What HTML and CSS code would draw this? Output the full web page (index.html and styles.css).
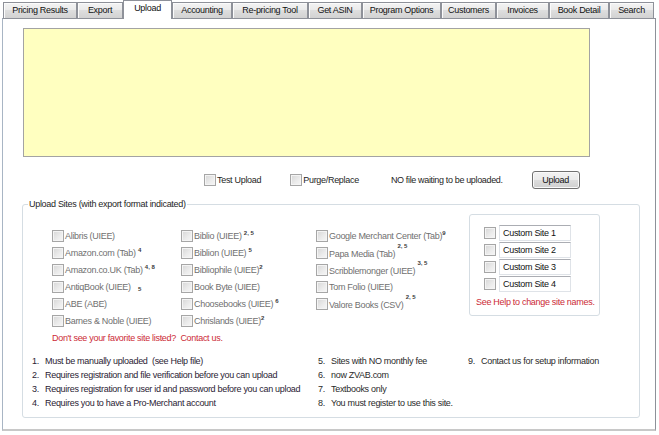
FILE: index.html
```html
<!DOCTYPE html>
<html>
<head>
<meta charset="utf-8">
<link rel="stylesheet" href="styles.css">
</head>
<body>
<div class="app">
  <div class="tabs">
    <div class="tab">Pricing Results</div>
    <div class="tab">Export</div>
    <div class="tab active">Upload</div>
    <div class="tab">Accounting</div>
    <div class="tab">Re-pricing Tool</div>
    <div class="tab">Get ASIN</div>
    <div class="tab">Program Options</div>
    <div class="tab">Customers</div>
    <div class="tab">Invoices</div>
    <div class="tab">Book Detail</div>
    <div class="tab">Search</div>
  </div>
  <div class="panel">
    <div class="log"></div>
    <div class="options">
      <label class="opt opt-test"><span class="cb"></span>Test Upload</label>
      <label class="opt opt-purge"><span class="cb"></span>Purge/Replace</label>
      <span class="status">NO file waiting to be uploaded.</span>
      <button class="btn">Upload</button>
    </div>
    <fieldset class="group">
      <legend>Upload Sites (with export format indicated)</legend>
      <div class="sites">
        <div class="col col1">
          <div class="site"><span class="cb"></span><span class="name">Alibris (UIEE)</span></div>
          <div class="site"><span class="cb"></span><span class="name">Amazon.com (Tab) <sup class="n">4</sup></span></div>
          <div class="site"><span class="cb"></span><span class="name">Amazon.co.UK (Tab) <sup class="n">4, 8</sup></span></div>
          <div class="site"><span class="cb"></span><span class="name">AntiqBook (UIEE) <span class="n lo">5</span></span></div>
          <div class="site"><span class="cb"></span><span class="name">ABE (ABE)</span></div>
          <div class="site"><span class="cb"></span><span class="name">Barnes &amp; Noble (UIEE)</span></div>
        </div>
        <div class="col col2">
          <div class="site"><span class="cb"></span><span class="name">Biblio (UIEE) <sup class="n">2, 5</sup></span></div>
          <div class="site"><span class="cb"></span><span class="name">Biblion (UIEE) <sup class="n">5</sup></span></div>
          <div class="site"><span class="cb"></span><span class="name">Bibliophile (UIEE)<sup class="n">2</sup></span></div>
          <div class="site"><span class="cb"></span><span class="name">Book Byte (UIEE)</span></div>
          <div class="site"><span class="cb"></span><span class="name">Choosebooks (UIEE) <sup class="n">6</sup></span></div>
          <div class="site"><span class="cb"></span><span class="name">Chrislands (UIEE)<sup class="n">2</sup></span></div>
        </div>
        <div class="col col3">
          <div class="site"><span class="cb"></span><span class="name">Google Merchant Center (Tab)<sup class="n">9</sup></span></div>
          <div class="site"><span class="cb"></span><span class="name">Papa Media (Tab) <sup class="n hi">2, 5</sup></span></div>
          <div class="site"><span class="cb"></span><span class="name">Scribblemonger (UIEE) <sup class="n hi">3, 5</sup></span></div>
          <div class="site"><span class="cb"></span><span class="name">Tom Folio (UIEE)</span></div>
          <div class="site"><span class="cb"></span><span class="name">Valore Books (CSV) <sup class="n hi">2, 5</sup></span></div>
        </div>
        <div class="custom">
          <div class="crow"><span class="cb"></span><span class="tb">Custom Site 1</span></div>
          <div class="crow"><span class="cb"></span><span class="tb">Custom Site 2</span></div>
          <div class="crow"><span class="cb"></span><span class="tb">Custom Site 3</span></div>
          <div class="crow"><span class="cb"></span><span class="tb">Custom Site 4</span></div>
          <div class="help">See Help to change site names.</div>
        </div>
      </div>
      <div class="contact">Don't see your favorite site listed?&nbsp; Contact us.</div>
      <div class="notes">
        <div class="ncol ncol1">
          <div class="note"><span class="num">1.</span>Must be manually uploaded&nbsp; (see Help file)</div>
          <div class="note"><span class="num">2.</span>Requires registration and file verification before you can upload</div>
          <div class="note"><span class="num">3.</span>Requires registration for user id and password before you can upload</div>
          <div class="note"><span class="num">4.</span>Requires you to have a Pro-Merchant account</div>
        </div>
        <div class="ncol">
          <div class="note"><span class="num">5.</span>Sites with NO monthly fee</div>
          <div class="note"><span class="num">6.</span>now ZVAB.com</div>
          <div class="note"><span class="num">7.</span>Textbooks only</div>
          <div class="note"><span class="num">8.</span>You must register to use this site.</div>
        </div>
        <div class="ncol">
          <div class="note"><span class="num">9.</span>Contact us for setup information</div>
        </div>
      </div>
    </fieldset>
  </div>
</div>
</body>
</html>
```
FILE: styles.css
```css
* { box-sizing: border-box; }
html, body { margin: 0; padding: 0; background: #ffffff; }
body {
  font-family: "Liberation Sans", Arial, sans-serif;
  font-size: 9px;
  letter-spacing: -0.3px;
  color: #1e1e1e;
}
.app { width: 659px; height: 435px; }

/* tabs */
.tabs {
  display: flex;
  align-items: flex-end;
  height: 18px;
  padding-left: 3px;
}
.tab {
  height: 16px;
  line-height: 15px;
  text-align: center;
  white-space: nowrap;
  border: 1px solid #8e9199;
  border-bottom: none;
  background: linear-gradient(#f3f3f3 0%, #ebebeb 45%, #dedede 50%, #d2d2d2 100%);
  color: #111;
  box-shadow: inset 1px 1px 0 #fbfbfb;
}
.tab.active {
  height: 19px;
  margin-bottom: -1px;
  background: #ffffff;
  box-shadow: none;
  line-height: 14px;
  position: relative;
  z-index: 2;
}
.tab:nth-child(1) { width: 74px; }
.tab:nth-child(2) { width: 46px; }
.tab:nth-child(3) { width: 49px; }
.tab:nth-child(4) { width: 60px; }
.tab:nth-child(5) { width: 76px; }
.tab:nth-child(6) { width: 54px; }
.tab:nth-child(7) { width: 79px; }
.tab:nth-child(8) { width: 55px; }
.tab:nth-child(9) { width: 53px; }
.tab:nth-child(10) { width: 60px; }
.tab:nth-child(11) { width: 45px; }

/* panel */
.panel {
  position: relative;
  z-index: 1;
  margin-left: 2px;
  width: 654px;
  height: 413px;
  border: 1px solid #8e9199;
  border-left-color: #a8b5c4;
  border-bottom: 2px solid #c8c8c8;
  background: #ffffff;
  padding: 9px 0 0 19px;
}
.log {
  margin-left: 1px;
  width: 567px;
  height: 129px;
  background: #ffffc0;
  border: 1px solid #a3a3a3;
}

/* options row */
.options {
  display: flex;
  align-items: center;
  height: 18px;
  margin-top: 14px;
}
.opt { display: flex; align-items: center; color: #1e1e1e; }
.opt .cb { margin-right: 1px; }
.opt-test { margin-left: 182px; }
.opt-purge { margin-left: 29px; }
.status { margin-left: 32px; letter-spacing: -0.35px; }
.btn {
  margin-left: 29px;
  width: 48px;
  height: 18px;
  padding: 0;
  font: inherit;
  letter-spacing: inherit;
  color: #111;
  border: 1px solid #707070;
  border-radius: 3px;
  background: linear-gradient(#f2f2f2 0%, #ebebeb 48%, #dddddd 52%, #cfcfcf 100%);
  box-shadow: inset 0 0 0 1px #fafafa;
}

/* checkbox */
.cb {
  display: inline-block;
  flex: none;
  width: 12px;
  height: 12px;
  border: 1px solid #a6a6a6;
  background: linear-gradient(135deg, #d6d6d6 0%, #ececec 60%, #f6f6f6 100%);
  box-shadow: inset 0 0 0 1px #f4f4f4;
}

/* group */
.group {
  margin: 9px 0 0 0;
  width: 618px;
  min-width: 0;
  border: 1px solid #d5dde3;
  border-radius: 3px;
  padding: 4px 0 7px 0;
}
.group legend {
  margin-left: 5px;
  padding: 0 1px;
  line-height: 12px;
  color: #1e1e1e;
}
.sites { display: flex; padding-left: 29px; }
.col { padding-top: 13px; }
.col1 { width: 129px; }
.col2 { width: 135px; }
.col3 { width: 153px; }
.site {
  display: flex;
  align-items: center;
  height: 17px;
  white-space: nowrap;
}
.site .cb { margin-right: 1px; }
.name { color: #707070; }
.n {
  font-size: 6px;
  font-weight: bold;
  letter-spacing: 0;
  color: #3a3a3a;
  vertical-align: 4px;
  line-height: 0;
}
.n.hi { vertical-align: 9px; }
.n.lo { vertical-align: -1px; margin-left: 5px; }

.custom {
  width: 131px;
  height: 102px;
  border: 1px solid #d5dde3;
  border-radius: 3px;
  padding: 9px 0 0 14px;
}
.crow {
  display: flex;
  align-items: center;
  height: 17px;
}
.crow .cb { margin-right: 3px; }
.tb {
  width: 72px;
  height: 16px;
  line-height: 14px;
  padding-left: 3px;
  border: 1px solid #dfe3e8;
  border-top-color: #abadb3;
  color: #111;
  background: #fff;
}
.help {
  margin: 4px 0 0 -8px;
  line-height: 12px;
  color: #cc2a36;
  white-space: nowrap;
}
.contact {
  margin-top: 3px;
  padding-left: 29px;
  line-height: 12px;
  color: #cc2a36;
}
.notes {
  display: grid;
  grid-template-columns: 286px 150px auto;
  margin-top: 10px;
  padding-left: 9px;
}
.note {
  height: 14px;
  line-height: 14px;
  white-space: nowrap;
  color: #2a2a2a;
}
.ncol1 .note { color: #2a2233; }
.num { display: inline-block; width: 13px; }
```
